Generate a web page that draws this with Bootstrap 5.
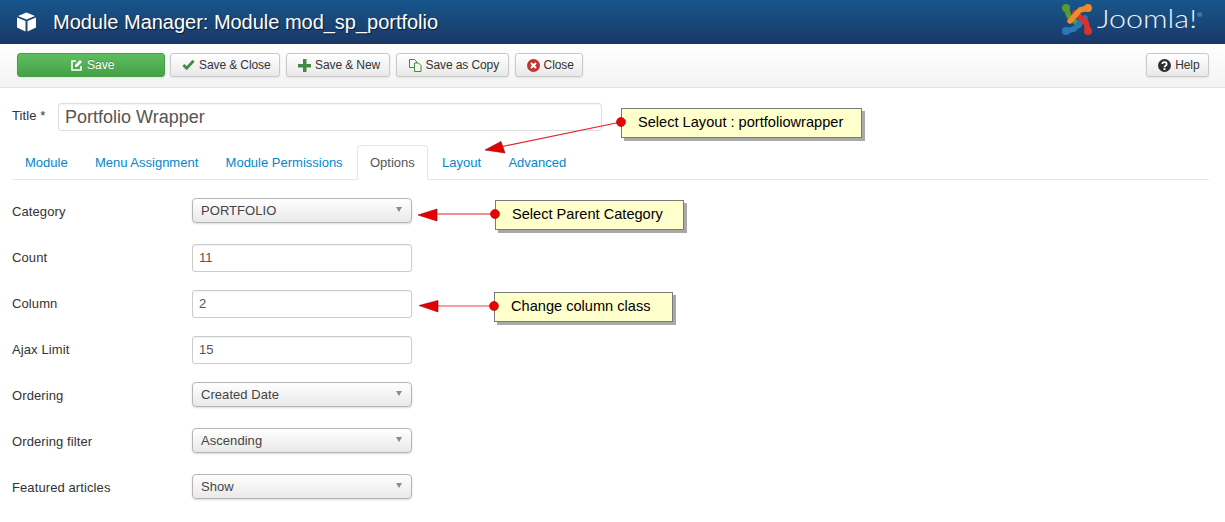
<!DOCTYPE html>
<html lang="en">
<head>
<meta charset="utf-8">
<title>Module Manager</title>
<link href="https://cdn.jsdelivr.net/npm/bootstrap@5.3.0/dist/css/bootstrap.min.css" rel="stylesheet">
<style>
html,body{height:522px;overflow:hidden}
body{font-family:"Liberation Sans",Arial,sans-serif;font-size:13px;color:#333;background:#fff;position:relative}
.jm-head{height:44px;background:linear-gradient(#17568c,#1a3867);color:#fff;padding:0 22px 0 17px}
.jm-title{font-size:20px;line-height:44px;margin:0 0 0 17px;font-weight:400;text-shadow:1px 1px 1px rgba(0,0,0,.6);letter-spacing:-.02px}
.jm-logotext{font-family:Lato,"Liberation Sans",sans-serif;font-weight:300;font-size:25px;line-height:30px;color:#eef3f8;width:106px;white-space:nowrap;transform:translateY(-4px) scaleX(1.22);transform-origin:left center}
.jm-logotext sup{font-size:5px;top:-11px;left:0}
.jm-tool{height:44px;padding:9px 16px 0 17px;background:linear-gradient(#fff,#f3f3f3);border-bottom:1px solid #e2e2e2;gap:6px}
.jm-btn{height:24px;padding:0 8.5px 0 11px;font-size:12px;line-height:22px;color:#333;border:1px solid #c9c9c9;border-radius:3px;background:linear-gradient(#fff,#e9e9e9);box-shadow:0 1px 2px rgba(0,0,0,.08);display:inline-flex;align-items:center;justify-content:center;gap:4px;white-space:nowrap;letter-spacing:-.1px}
.jm-save{width:148px;margin-right:-1px;color:#fff;background:linear-gradient(#5fbe5f,#47a047);border-color:#45a045;text-shadow:0 -1px 0 rgba(0,0,0,.25);letter-spacing:0}
.jm-save:hover{color:#fff}
.jm-titlerow{padding:15px 623px 0 12px}
.jm-titlerow label{width:46px;flex:none;margin-top:-3px;letter-spacing:.1px}
.jm-titleinput{height:28px;font-size:18px;color:#555;padding:0 6px;border:1px solid #ddd;border-radius:3px;box-shadow:inset 0 1px 1px rgba(0,0,0,.05);width:544px;flex:none;font-family:inherit}
.jm-tabs{margin:14px 16px 0 12px;border-bottom:1px solid #e6e6e6;height:35px;flex-wrap:nowrap}
.jm-tabs .nav-link{font-size:13px;line-height:18px;padding:8px 12px 8px;color:#0088cc;border:1px solid transparent;border-radius:4px 4px 0 0;margin:0;background:none;height:35px}
.jm-tabs .nav-link.active{color:#555;background:#fff;border-color:#e6e6e6 #e6e6e6 #fff}
.jm-tabs .nav-item{margin-right:1.3px}
.jm-form{padding:18px 0 0 12px}
.jm-field{height:46px;align-items:flex-start}
.jm-field label{width:180px;flex:none;line-height:18px;margin-top:5px;letter-spacing:.1px}
.jm-text{width:220px;height:28px;font-size:13px;color:#555;padding:0 6px 2px;border:1px solid #ccc;border-radius:3px;box-shadow:inset 0 1px 1px rgba(0,0,0,.06);font-family:inherit}
.jm-drop{width:220px;height:25px;font-size:13px;color:#444;padding:0 8px;border:1px solid #b5b5b5;border-radius:4px;box-shadow:0 1px 2px rgba(0,0,0,.15);font-family:inherit;letter-spacing:.05px;line-height:20px;background-image:linear-gradient(#fff,#e9e9e9);position:relative;display:flex;align-items:center}
.jm-drop::after{content:"";position:absolute;right:9px;top:8px;border-left:3.5px solid transparent;border-right:3.5px solid transparent;border-top:5px solid #8a8a8a}
.jm-note{position:absolute;background:#ffffcc;border:1px solid #7a7a7a;box-shadow:3px 3px 0 #a9a9a9;color:#000;font-size:14.6px;height:30px;padding-left:16px;white-space:nowrap;display:flex;align-items:center}
.jm-n1{left:621px;top:108px;width:241px}
.jm-n2{left:495px;top:200px;width:189px}
.jm-n3{left:494px;top:292px;width:179px}
.jm-arrows{position:absolute;left:0;top:0;pointer-events:none}
</style>
</head>
<body>
<header class="jm-head d-flex align-items-center">
  <svg width="19" height="20" viewBox="0 0 19 20" aria-hidden="true"><path fill="#fff" d="M9.500 .5l8.500 3.500-8.500 3.500L1 4zM0 5.500l8.500 3.500v10.500L0 15.500zM19 5.500l-8.500 3.500v10.500l8.500-4z"/></svg>
  <h1 class="jm-title flex-grow-1">Module Manager: Module mod_sp_portfolio</h1>
  <div class="d-flex align-items-center gap-1">
    <svg class="jm-mark" width="32" height="32" viewBox="0 0 32 32" aria-hidden="true" style="margin-top:-6px">
      <g fill="none" stroke-width="5.500" stroke-linecap="round" stroke-linejoin="round">
        <path stroke="#5a9a2e" d="M5 5L8 13L18 22"/>
        <path stroke="#2a77b8" d="M5 28L13 26L24 15"/>
        <path stroke="#d9342c" d="M27 28L25 19L14 10"/>
        <path stroke="#ef8a2e" d="M27 5L19 7L9 18"/>
      </g>
      <circle cx="5" cy="5" r="4" fill="#5a9a2e"/><circle cx="27" cy="5" r="4" fill="#ef8a2e"/><circle cx="5" cy="28" r="4" fill="#2a77b8"/><circle cx="27" cy="28" r="4" fill="#d9342c"/>
    </svg>
    <div class="jm-logotext">Joomla!<sup>®</sup></div>
  </div>
</header>
<div class="jm-tool d-flex">
  <button type="button" class="btn jm-btn jm-save"><svg width="13" height="13" viewBox="0 0 13 13"><path fill="none" stroke="#fff" stroke-width="1.600" d="M6 2H2v9h9V7"/><path fill="#fff" d="M5 6l5-5 2 2-5 5H5z"/></svg>Save</button>
  <button type="button" class="btn jm-btn"><svg width="13" height="12" viewBox="0 0 14 12"><path fill="none" stroke="#468847" stroke-width="3" d="M1.500 6l3.500 3.500 7.500-8"/></svg>Save &amp; Close</button>
  <button type="button" class="btn jm-btn"><svg width="13" height="13" viewBox="0 0 13 13"><path fill="#468847" d="M5 0h3.500v5H13v3.500H8.500V13H5V8.500H0V5h5z"/></svg>Save &amp; New</button>
  <button type="button" class="btn jm-btn"><svg width="14" height="14" viewBox="0 0 14 14"><path fill="none" stroke="#468847" d="M1.500 1.500h5l2 2v6h-7z"/><path fill="#f4f8e8" stroke="#468847" d="M6.500 5h4l2.500 2.500v6H6.500z"/></svg>Save as Copy</button>
  <button type="button" class="btn jm-btn"><svg width="13" height="13" viewBox="0 0 13 13"><circle cx="6.500" cy="6.500" r="6.500" fill="#bd362f"/><path stroke="#fff" stroke-width="2" d="M4 4l5 5M9 4l-5 5"/></svg>Close</button>
  <button type="button" class="btn jm-btn ms-auto"><svg width="13" height="13" viewBox="0 0 13 13"><circle cx="6.500" cy="6.500" r="6.500" fill="#2d2d2d"/><path fill="none" stroke="#fff" stroke-width="1.800" d="M4.300 5a2.200 2 0 1 1 3.300 1.800c-.8.500-1.100.9-1.100 1.500"/><rect x="5.500" y="9.200" width="2" height="1.800" fill="#fff"/></svg>Help</button>
</div>
<div class="jm-titlerow d-flex align-items-center">
  <label for="jm-t">Title *</label>
  <input id="jm-t" class="jm-titleinput" type="text" value="Portfolio Wrapper">
</div>
<ul class="nav nav-tabs jm-tabs">
  <li class="nav-item"><a class="nav-link" href="#">Module</a></li>
  <li class="nav-item"><a class="nav-link" href="#">Menu Assignment</a></li>
  <li class="nav-item"><a class="nav-link" href="#">Module Permissions</a></li>
  <li class="nav-item"><a class="nav-link active" href="#">Options</a></li>
  <li class="nav-item"><a class="nav-link" href="#">Layout</a></li>
  <li class="nav-item"><a class="nav-link" href="#">Advanced</a></li>
</ul>
<form class="jm-form">
  <div class="jm-field d-flex"><label>Category</label><div class="jm-drop">PORTFOLIO</div></div>
  <div class="jm-field d-flex"><label>Count</label><input class="jm-text" type="text" value="11"></div>
  <div class="jm-field d-flex"><label>Column</label><input class="jm-text" type="text" value="2"></div>
  <div class="jm-field d-flex"><label>Ajax Limit</label><input class="jm-text" type="text" value="15"></div>
  <div class="jm-field d-flex"><label>Ordering</label><div class="jm-drop">Created Date</div></div>
  <div class="jm-field d-flex"><label>Ordering filter</label><div class="jm-drop">Ascending</div></div>
  <div class="jm-field d-flex"><label>Featured articles</label><div class="jm-drop">Show</div></div>
</form>
<div class="jm-note jm-n1">Select Layout : portfoliowrapper</div>
<div class="jm-note jm-n2">Select Parent Category</div>
<div class="jm-note jm-n3">Change column class</div>
<svg class="jm-arrows" width="1225" height="522" aria-hidden="true">
  <g stroke="#e8202a" fill="none" stroke-width="1.200">
    <path d="M621 122L500 147"/>
    <path d="M495 214H436"/>
    <path stroke="#f04040" d="M494 306H437"/>
  </g>
  <g fill="#e60000" stroke="#900" stroke-width=".6">
    <path d="M485 150L501 141.500L505 153z"/>
    <path d="M418 215L437 209V221z"/>
    <path d="M419 305.500L438 300.500V312z"/>
    <circle fill="#f00000" cx="621" cy="122" r="4.500"/><circle fill="#f00000" cx="495" cy="214" r="4.500"/><circle fill="#f00000" cx="494" cy="306" r="4.500"/>
  </g>
</svg>
</body>
</html>
